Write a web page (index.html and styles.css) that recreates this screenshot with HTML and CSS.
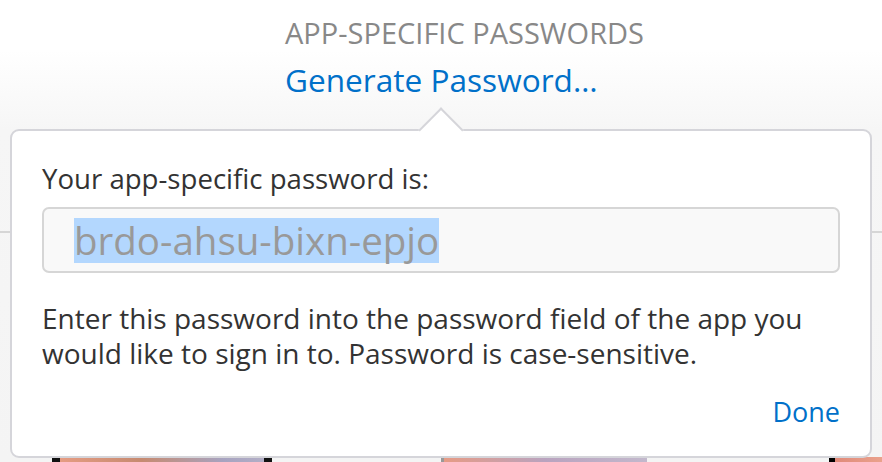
FILE: index.html
```html
<!DOCTYPE html>
<html>
<head>
<meta charset="utf-8">
<link rel="stylesheet" href="styles.css">
</head>
<body>
<div class="page">
  <header class="head">
    <div class="title">APP-SPECIFIC PASSWORDS</div>
    <a class="gen">Generate Password…</a>
  </header>
  <div class="backdrop">
    <div class="rule"></div>
    <div class="tiles">
      <div class="tile t1"></div>
      <div class="tile t2"></div>
      <div class="tile t3"></div>
    </div>
  </div>
  <div class="popover">
    <div class="arrow"></div>
    <p class="label">Your app-specific password is:</p>
    <div class="field"><span class="pw">brdo-ahsu-bixn-epjo</span></div>
    <p class="desc">Enter this password into the password field of the app you would like to sign in to. Password is case-sensitive.</p>
    <div class="actions"><a class="done">Done</a></div>
  </div>
</div>
</body>
</html>
```

FILE: styles.css
```css
html, body {
  margin: 0;
  padding: 0;
}
body {
  width: 882px;
  height: 462px;
  overflow: hidden;
  font-family: "Open Sans", "Noto Sans", sans-serif;
  background: #fff;
}
.page {
  position: relative;
  width: 882px;
  height: 462px;
  background: linear-gradient(#ffffff 0px, #ffffff 50px, #f6f6f6 130px, #f4f4f4 462px);
}
.head {
  display: flex;
  flex-direction: column;
  align-items: flex-start;
  padding-left: 285px;
  padding-top: 15px;
}
.title {
  font-size: 29px;
  line-height: 36px;
  color: #888888;
}
.gen {
  margin-top: 10px;
  font-size: 31.6px;
  line-height: 38px;
  color: #0070c9;
}
.backdrop {
  padding-top: 132px;
}
.rule {
  height: 2px;
  background: #d6d6d6;
}
.tiles {
  display: flex;
  margin-top: 224px;
  height: 8px;
}
.tile {
  height: 8px;
}
.t1 {
  margin-left: 52px;
  width: 220px;
  border-left: 8px solid #111;
  border-right: 8px solid #111;
  box-sizing: border-box;
  background: linear-gradient(90deg, #e59c82, #c68a70 40%, #a7a3c0 80%, #b2aec6);
}
.t2 {
  margin-left: 169px;
  width: 206px;
  border-left: 3px solid #999;
  box-sizing: border-box;
  background: linear-gradient(90deg, #e69b85, #b9a3bf 50%, #c2b8cc);
}
.t3 {
  margin-left: 182px;
  width: 53px;
  border-left: 6px solid #000;
  box-sizing: border-box;
  background: linear-gradient(90deg, #e08a7a, #eaa28c);
}
.popover {
  position: absolute;
  left: 10px;
  top: 129px;
  width: 862px;
  height: 329px;
  box-sizing: border-box;
  background: #fff;
  border: 2px solid #d5d5da;
  border-radius: 9px;
  padding: 30px 30px 0 30px;
  display: flex;
  flex-direction: column;
}
.arrow {
  position: absolute;
  left: 413px;
  top: -17px;
  width: 32px;
  height: 32px;
  background: #fff;
  border-left: 2px solid #d5d5da;
  border-top: 2px solid #d5d5da;
  transform: rotate(45deg);
  box-sizing: border-box;
}
.label {
  margin: 0;
  font-size: 27.6px;
  line-height: 34px;
  color: #333333;
}
.field {
  margin-top: 12px;
  height: 66px;
  box-sizing: border-box;
  border: 2px solid #d6d6d6;
  border-radius: 7px;
  background: #f9f9f9;
  padding-left: 30px;
  display: flex;
  align-items: center;
}
.pw {
  display: inline-block;
  height: 45px;
  background: #b3d7fe;
  color: #999999;
  font-size: 38.5px;
  line-height: 45px;
}
.desc {
  margin: 28px 0 0 0;
  font-size: 28px;
  line-height: 35px;
  color: #333333;
  max-width: 800px;
}
.actions {
  display: flex;
  justify-content: flex-end;
  margin-top: 24px;
}
.done {
  font-size: 27px;
  line-height: 33px;
  color: #0070c9;
}
```
